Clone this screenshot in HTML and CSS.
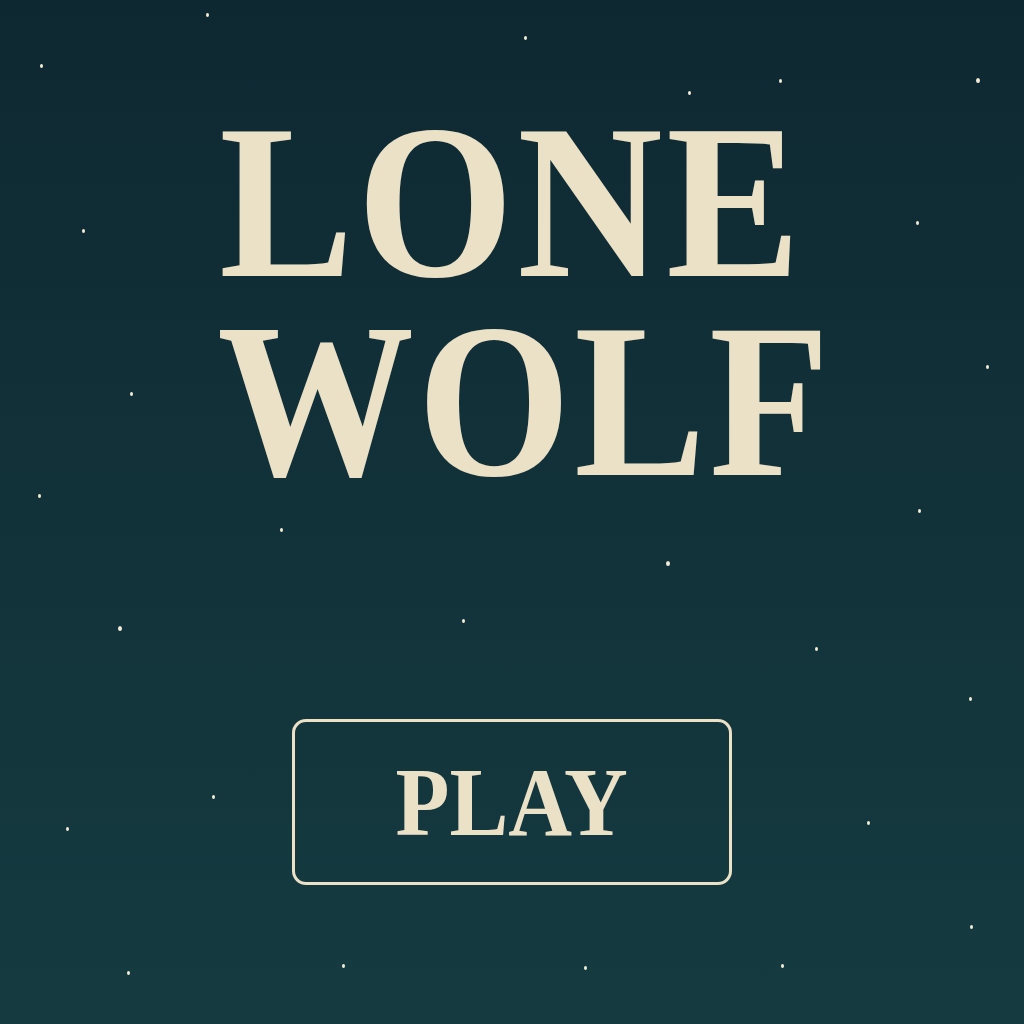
FILE: index.html
```html
<!DOCTYPE html>
<html lang="en">
<head>
<meta charset="utf-8">
<title>Lone Wolf</title>
<link rel="stylesheet" href="styles.css">
</head>
<body>
<div class="screen">
  <div class="stars">
    <i class="star" style="left:206px;top:13px"></i>
    <i class="star" style="left:524px;top:36px"></i>
    <i class="star" style="left:40px;top:64px"></i>
    <i class="star" style="left:688px;top:91px"></i>
    <i class="star" style="left:779px;top:79px"></i>
    <i class="star big" style="left:976px;top:78px"></i>
    <i class="star" style="left:82px;top:229px"></i>
    <i class="star" style="left:916px;top:221px"></i>
    <i class="star" style="left:130px;top:392px"></i>
    <i class="star" style="left:986px;top:365px"></i>
    <i class="star" style="left:38px;top:494px"></i>
    <i class="star" style="left:918px;top:509px"></i>
    <i class="star" style="left:280px;top:528px"></i>
    <i class="star big" style="left:666px;top:561px"></i>
    <i class="star big" style="left:118px;top:626px"></i>
    <i class="star" style="left:462px;top:619px"></i>
    <i class="star" style="left:815px;top:647px"></i>
    <i class="star" style="left:969px;top:697px"></i>
    <i class="star" style="left:212px;top:795px"></i>
    <i class="star" style="left:66px;top:827px"></i>
    <i class="star" style="left:867px;top:821px"></i>
    <i class="star" style="left:970px;top:925px"></i>
    <i class="star" style="left:127px;top:971px"></i>
    <i class="star" style="left:342px;top:964px"></i>
    <i class="star" style="left:584px;top:966px"></i>
    <i class="star" style="left:781px;top:964px"></i>
  </div>
  <main class="menu">
    <h1 class="title">
      <span class="line">LONE</span>
      <span class="line line-wolf">WOLF</span>
    </h1>
    <button class="play" type="button"><span class="play-label">PLAY</span></button>
  </main>
</div>
</body>
</html>
```
FILE: styles.css
```css
html, body {
  margin: 0;
  padding: 0;
}
body {
  width: 1024px;
  height: 1024px;
  overflow: hidden;
  background: #12313a;
}
.screen {
  position: relative;
  width: 1024px;
  height: 1024px;
  background: linear-gradient(180deg, #0e2832 0%, #12323a 50%, #153b41 100%);
  color: #ebe1c6;
  font-family: "Liberation Serif", "Times New Roman", serif;
}
.stars {
  position: absolute;
  inset: 0;
  pointer-events: none;
}
.star {
  position: absolute;
  width: 3px;
  height: 4px;
  border-radius: 50%;
  background: #f4ecd6;
}
.star.big {
  width: 4px;
  height: 5px;
}
.menu {
  position: relative;
  display: flex;
  flex-direction: column;
  align-items: center;
  padding-top: 103px;
}
.title {
  margin: 0;
  display: flex;
  flex-direction: column;
  align-items: center;
  font-weight: 700;
  font-size: 220px;
  line-height: 199px;
  letter-spacing: 4px;
}
.line {
  display: block;
  transform: scaleX(0.915);
}
.line-wolf {
  margin-left: 26px;
  transform: scaleX(0.895);
}
.play {
  margin-top: 218px;
  width: 440px;
  height: 166px;
  box-sizing: border-box;
  border: 3px solid #ebe1c6;
  border-radius: 14px;
  background: transparent;
  color: #ebe1c6;
  font-family: "Liberation Serif", "Times New Roman", serif;
  font-weight: 700;
  font-size: 97px;
  line-height: 1;
  padding: 0;
  display: flex;
  align-items: center;
  justify-content: center;
}
.play-label {
  display: block;
  transform: scaleX(0.91);
  padding-top: 1px;
}
```
